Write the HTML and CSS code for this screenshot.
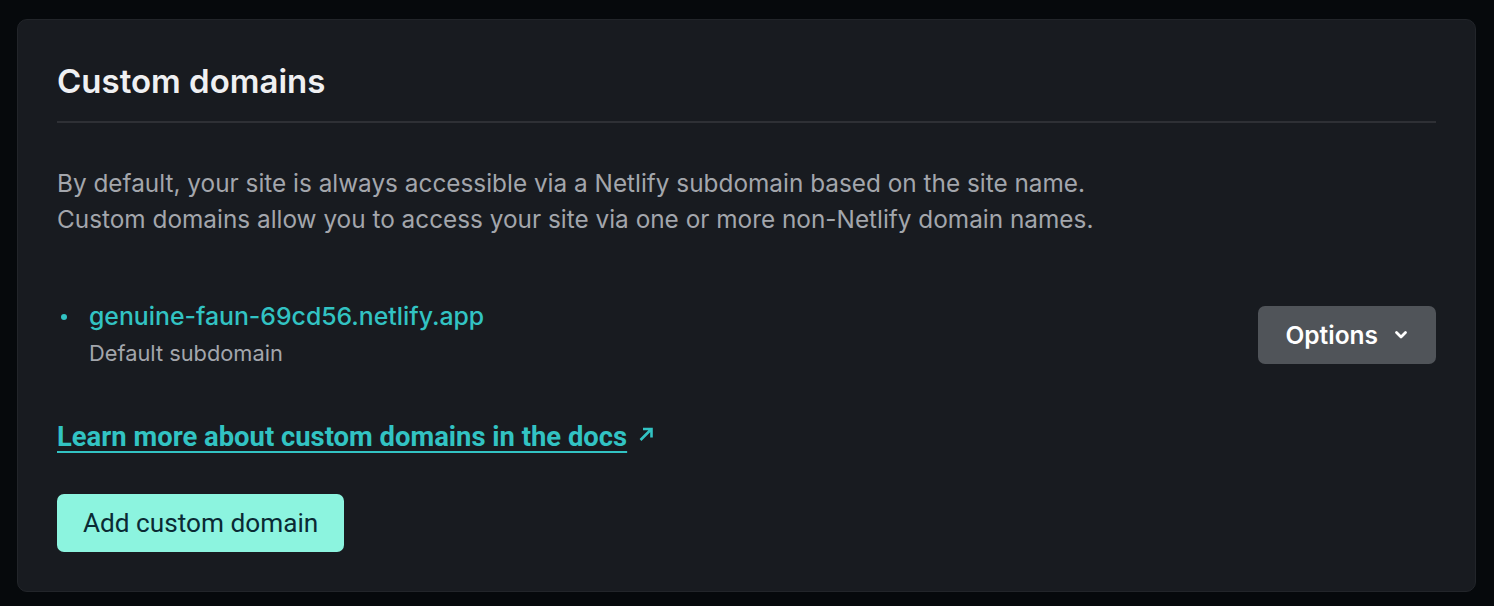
FILE: index.html
```html
<!DOCTYPE html>
<html lang="en">
<head>
    <meta charset="UTF-8">
    <meta name="viewport" content="width=device-width, initial-scale=1.0">
    <title>Custom domains</title>
    <link rel="stylesheet" href="styles.css">
</head>
<body>
    <section class="card">
        <h2 class="card-title">Custom domains</h2>

        <p class="intro">
            By default, your site is always accessible via a Netlify subdomain based on the site name.<br>
            Custom domains allow you to access your site via one or more non-Netlify domain names.
        </p>

        <!-- domain list -->
        <ul class="domains">
            <li class="domain">
                <div class="domain-info">
                    <a class="domain-name" href="#">genuine-faun-69cd56.netlify.app</a>
                    <span class="domain-note">Default subdomain</span>
                </div>
                <button class="btn-options">
                    Options
                    <svg width="14" height="10" viewBox="0 0 14 10"><path d="M2.5 2.5 7 7l4.5-4.5" fill="none" stroke="currentColor" stroke-width="2.8" stroke-linecap="round" stroke-linejoin="round"/></svg>
                </button>
            </li>
        </ul>

        <p class="docs">
            <a href="#">Learn more about custom domains in the docs</a>
            <svg class="ext" width="16" height="16" viewBox="0 0 16 16"><path d="M2.5 14 13 3.5M5 3H13.5V11.5" fill="none" stroke="currentColor" stroke-width="2.6"/></svg>
        </p>

        <button class="btn-add">Add custom domain</button>
    </section>
</body>
</html>
```

FILE: styles.css
```css
body {
    margin: 0;
    padding: 19px 18px 15px 17px;
    background-color: #06090c;
    font-family: Inter, "Noto Sans", sans-serif;
    color: #eff0f2;
}
.card {
    background: #181b20;
    border: 1px solid #22252a;
    border-radius: 10px;
    padding: 40px 39px 39px;
}
.card-title {
    margin: 0;
    font-size: 33px;
    font-weight: 600;
    line-height: 40px;
    padding: 1px 0 20px;
    border-bottom: 2px solid #2e3035;
}
.intro {
    margin: 42px 0 0;
    font-size: 24.35px;
    line-height: 36px;
    color: #a3a6ac;
}
.domains {
    list-style: none;
    margin: 64px 0 0;
    padding: 0;
}
.domain {
    display: flex;
    justify-content: space-between;
    align-items: center;
}
.domain-info {
    display: flex;
    flex-direction: column;
    position: relative;
    padding-left: 32px;
}
.domain-info::before {
    content: "";
    position: absolute;
    left: 4px;
    top: 13px;
    width: 6px;
    height: 6px;
    border-radius: 50%;
    background: #32c3c3;
}
.domain-name {
    color: #32c3c3;
    text-decoration: none;
    font-size: 24.8px;
    font-weight: 500;
    line-height: 30px;
}
.domain-note {
    color: #a3a6ac;
    font-size: 21.8px;
    line-height: 30px;
    margin-top: 7px;
}
.btn-options {
    display: flex;
    align-items: center;
    gap: 16px;
    height: 58px;
    padding: 0 28px 0 27px;
    background-color: #505459;
    color: #fff;
    border: none;
    border-radius: 7px;
    font-family: Inter, sans-serif;
    font-size: 24.5px;
    font-weight: 600;
    cursor: pointer;
}
.docs {
    margin: 54px 0 0;
    display: flex;
    align-items: center;
    gap: 11px;
    color: #32c3c3;
}
.docs a {
    color: #32c3c3;
    font-family: Roboto, sans-serif;
    font-weight: 700;
    font-size: 27.4px;
    line-height: 30px;
    text-decoration: underline;
    text-decoration-thickness: 2px;
    text-underline-offset: 5px;
}
.ext {
    margin-top: -6px;
}
.btn-add {
    margin-top: 42px;
    height: 58px;
    padding: 0 26px;
    background-color: #8cf4df;
    color: #0a2a34;
    border: none;
    border-radius: 7px;
    font-family: Roboto, sans-serif;
    font-size: 26.2px;
    cursor: pointer;
}
```
